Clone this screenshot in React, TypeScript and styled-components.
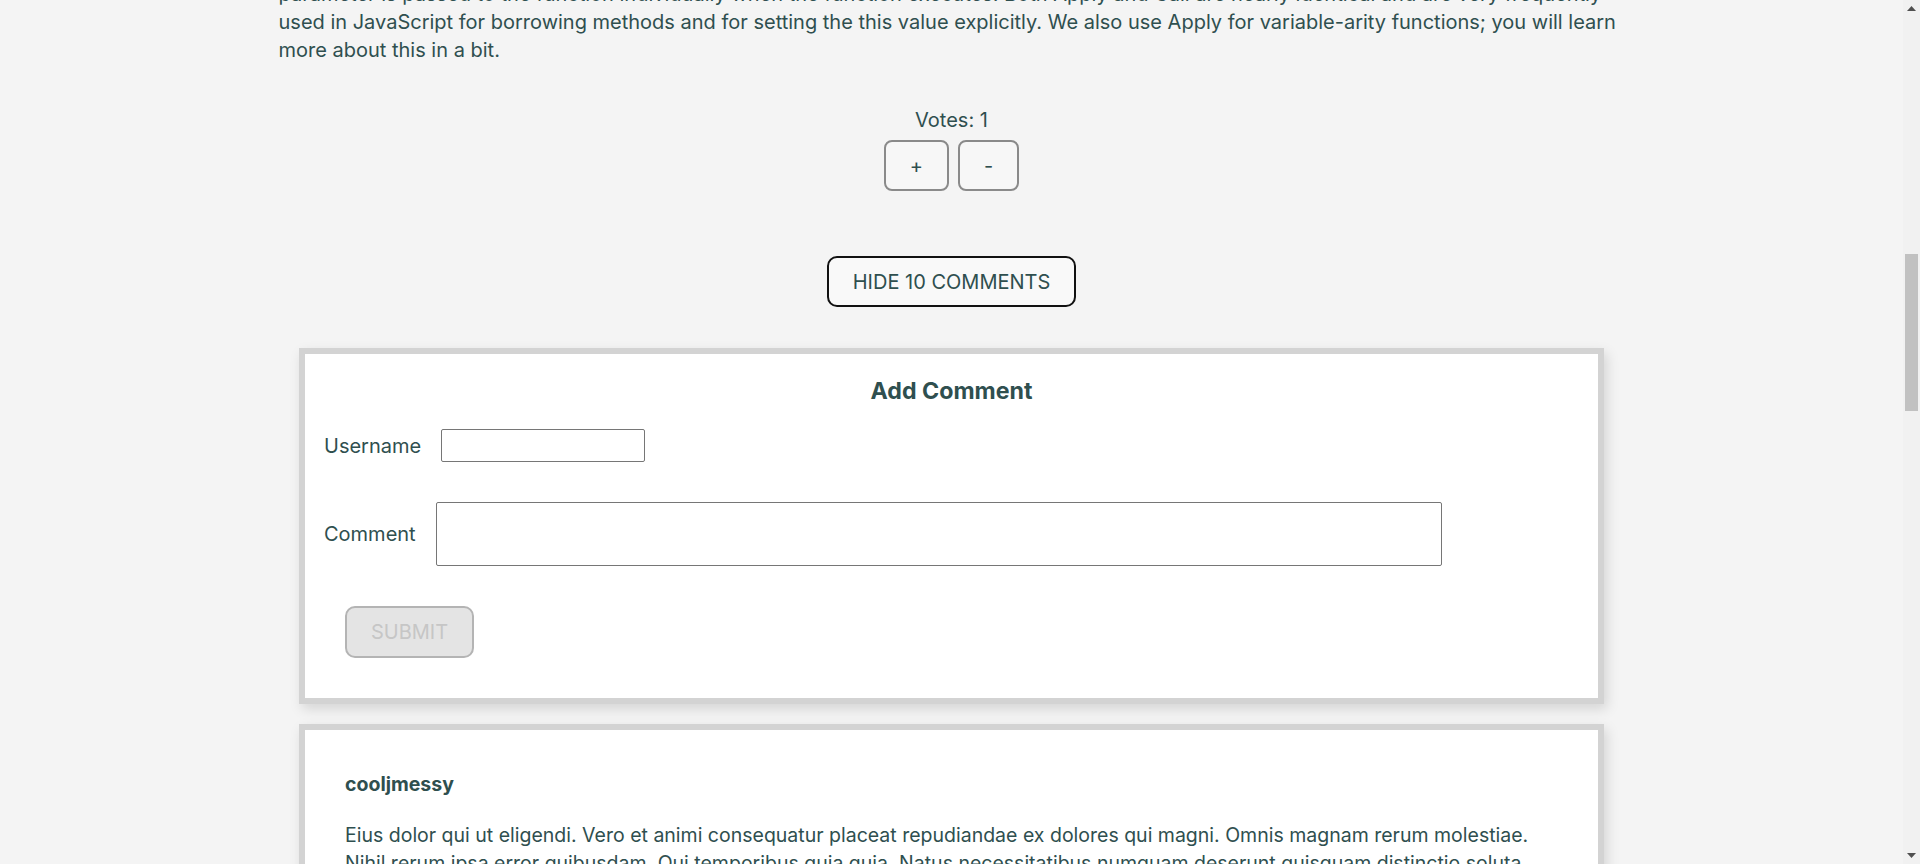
import { useLayoutEffect, useRef, useState, useCallback, RefObject } from "react";
import styled, { createGlobalStyle } from "styled-components";

const GlobalStyle = createGlobalStyle`
  html, body {
    margin: 0;
    padding: 0;
    height: 100%;
    overflow: hidden;
    background-color: #f4f4f4;
  }
  body {
    font-family: Inter, "Noto Sans", "Liberation Sans", sans-serif;
    color: #2f4f4f;
  }
  * {
    box-sizing: border-box;
  }
`;

const Layout = styled.div`
  display: flex;
  height: 100vh;
`;

const Scroller = styled.div`
  flex: 1;
  overflow-y: scroll;
  scrollbar-width: none;
  &::-webkit-scrollbar {
    display: none;
  }
`;

const Rail = styled.div`
  flex: none;
  width: 17px;
  display: flex;
  flex-direction: column;
  background-color: #f1f1f1;
`;

const RailArrow = styled.div`
  height: 17px;
  display: flex;
  align-items: center;
  justify-content: center;
  color: #505050;
`;

const Track = styled.div`
  flex: 1;
  padding: 0 2px;
`;

const Thumb = styled.div`
  background-color: #c1c1c1;
`;

const Page = styled.main`
  display: flex;
  flex-direction: column;
  align-items: center;
  padding: 48px 0 95px;
`;

const Post = styled.article`
  width: 1346px;
  display: flex;
  flex-direction: column;
  align-items: center;
`;

const PostTitle = styled.h2`
  align-self: stretch;
  margin: 0 0 12px;
  font-size: 34px;
  line-height: 44px;
  font-weight: 700;
`;

const Byline = styled.p`
  align-self: stretch;
  margin: 0 0 28px;
  font-size: 18px;
  color: #5f7777;
`;

const Paragraph = styled.p`
  align-self: stretch;
  margin: 0 0 28px;
  font-size: 20px;
  line-height: 28px;
`;

const VoteBox = styled.div`
  display: flex;
  flex-direction: column;
  align-items: center;
  gap: 8px;
  margin-top: 16px;
`;

const VoteCount = styled.span`
  font-size: 20px;
  line-height: 24px;
`;

const VoteButtons = styled.div`
  display: flex;
  gap: 9px;
`;

const VoteButton = styled.button`
  height: 51px;
  padding: 0 24px;
  font-family: inherit;
  font-size: 20px;
  color: #2f4f4f;
  background-color: #f7f7f7;
  border: 2px solid #8a8a8a;
  border-radius: 8px;
  cursor: pointer;
`;

const ToggleButton = styled.button`
  margin-top: 65px;
  height: 51px;
  padding: 0 24px;
  font-family: inherit;
  font-size: 20px;
  color: #2f4f4f;
  text-transform: uppercase;
  background-color: #f9f9f9;
  border: 2px solid #111;
  border-radius: 10px;
  cursor: pointer;
`;

const CommentList = styled.section`
  width: 1305px;
  margin-top: 41px;
  display: flex;
  flex-direction: column;
  gap: 20px;
`;

const Card = styled.div`
  background-color: #fff;
  border: 6px solid #d3d3d3;
  box-shadow: 3px 5px 12px rgba(0, 0, 0, 0.13);
`;

const FormCard = styled(Card).attrs({ as: "form" })`
  display: flex;
  flex-direction: column;
  padding: 22px 19px 40px;
`;

const FormTitle = styled.h3`
  margin: 0 0 23px;
  text-align: center;
  font-size: 23.2px;
  line-height: 30px;
  font-weight: 700;
`;

const FieldRow = styled.label`
  display: flex;
  align-items: center;
  gap: 20px;
  font-size: 20px;
  margin-bottom: 40px;
`;

const TextInput = styled.input`
  width: 204px;
  height: 33px;
  border: 1px solid #767676;
  border-radius: 2px;
  font-family: inherit;
  font-size: 16px;
`;

const TextArea = styled.textarea`
  width: 1006px;
  height: 64px;
  border: 1px solid #767676;
  border-radius: 2px;
  resize: none;
  font-family: inherit;
  font-size: 16px;
`;

const SubmitButton = styled.button`
  align-self: flex-start;
  margin-left: 21px;
  width: 129px;
  height: 52px;
  font-family: inherit;
  font-size: 20px;
  text-transform: uppercase;
  color: #c6c6c6;
  background-color: #e4e4e4;
  border: 2px solid #b4b4b4;
  border-radius: 10px;
`;

const CommentCard = styled(Card)`
  display: flex;
  flex-direction: column;
  gap: 22px;
  padding: 40px;
`;

const CommentAuthor = styled.h4`
  margin: 0;
  font-size: 19.5px;
  line-height: 29px;
  font-weight: 700;
`;

const CommentBody = styled.p`
  margin: 0;
  font-size: 19.5px;
  line-height: 28px;
`;

type Comment = { username: string; body: string };

const comments: Comment[] = [
  {
    username: "cooljmessy",
    body: "Eius dolor qui ut eligendi. Vero et animi consequatur placeat repudiandae ex dolores qui magni. Omnis magnam rerum molestiae. Nihil rerum ipsa error quibusdam. Qui temporibus quia quia. Natus necessitatibus numquam deserunt quisquam distinctio soluta. Consequuntur nisi aut qui quaerat ducimus est. Qui aut sed voluptatem ut et.",
  },
  {
    username: "weegembump",
    body: "Velit quia sint adipisci tenetur. Sed quaerat et distinctio porro. Voluptatem aut et eveniet. Et sed et eaque laudantium natus aut. Quae voluptas praesentium quia eius accusamus quidem nostrum et. Reiciendis qui voluptatem ullam necessitatibus enim. Tempore sequi blanditiis et quia eos molestias fugit quo.",
  },
  {
    username: "grumpy19",
    body: "Quasi omnis sunt enim aut qui eos. Sit quia qui harum rem repellendus. Ea consectetur qui accusantium eveniet quis. Odio aspernatur molestiae molestias nemo aliquid sit. Ut ut esse harum ipsum voluptas et consequatur. Dolores laborum voluptatem tenetur eum nihil. Accusantium et eaque et aut ex rerum.",
  },
  {
    username: "jessjelly",
    body: "Et et quo dolore ut in sit. Et est reprehenderit quia explicabo. Rerum velit et nesciunt rerum molestias necessitatibus. Laudantium ut quas soluta omnis voluptatem voluptatem consectetur aut. Architecto aut et ullam. Quis facilis rerum aut consequuntur quia aut. Eligendi maiores quo eum sit rerum nulla.",
  },
  {
    username: "happyamy2016",
    body: "Ut accusamus enim vel voluptate quae temporibus labore neque a. Reprehenderit iste est eos velit fugit vel quod velit. Vero cupiditate enim quis et eveniet. Corporis nobis aut ut sit quia sunt. Sapiente omnis numquam quasi in aut dolorem. Deserunt sint aut molestiae quod animi est eos ut nam.",
  },
  {
    username: "tickle122",
    body: "Facilis ipsam illum aut voluptatibus. Repudiandae cupiditate quo fugiat. Earum est quis dolorum aut aut. Consequatur et et dolores consectetur qui unde necessitatibus. Qui soluta occaecati est labore quod et magnam. Illum voluptatem dolores est. Omnis commodi a quia repellendus dicta sit.",
  },
  {
    username: "cooljmessy",
    body: "Assumenda sit est blanditiis asperiores est minima. Placeat sequi tempora et est magnam. Doloremque fugit dolorem praesentium quis aliquam odio et ut. Voluptates labore aut minus ipsa vel quod quis. Sint debitis perspiciatis ea omnis neque eveniet. Minus velit quo nisi reprehenderit explicabo quam.",
  },
  {
    username: "jessjelly",
    body: "Harum et iusto sint ut. Tenetur consequatur aut ex sapiente et accusamus. Corrupti consequatur quia itaque repudiandae. Explicabo et quam dolor est laborum sed optio molestias. Eaque ad quam molestias ut doloremque. Sunt autem a perferendis iusto cum et inventore.",
  },
  {
    username: "weegembump",
    body: "Iure cum non ut omnis et voluptatibus est et. Praesentium cupiditate ea doloribus dolor. Quaerat est veniam numquam voluptas ex est. Atque veritatis nihil quia veritatis porro doloremque. Quo temporibus et ducimus quae molestiae. Ad qui sint nobis molestias et eius.",
  },
  {
    username: "grumpy19",
    body: "Qui ut ut fuga fugit quia et. Voluptatem aut magnam nihil quos omnis culpa. Modi molestias enim magnam sed perspiciatis. Omnis et accusamus doloremque incidunt quia cupiditate. Magni voluptate cupiditate officia aut quae. Et delectus earum praesentium qui voluptatem officia.",
  },
];

function Votes({ count, anchorRef }: { count: number; anchorRef?: RefObject<HTMLDivElement | null> }) {
  return (
    <VoteBox ref={anchorRef}>
      <VoteCount>Votes: {count}</VoteCount>
      <VoteButtons>
        <VoteButton type="button">+</VoteButton>
        <VoteButton type="button">-</VoteButton>
      </VoteButtons>
    </VoteBox>
  );
}

function AddComment() {
  return (
    <FormCard onSubmit={(e: React.FormEvent) => e.preventDefault()}>
      <FormTitle>Add Comment</FormTitle>
      <FieldRow>
        Username
        <TextInput type="text" />
      </FieldRow>
      <FieldRow>
        Comment
        <TextArea />
      </FieldRow>
      <SubmitButton type="submit" disabled>
        Submit
      </SubmitButton>
    </FormCard>
  );
}

function ScrollRail({ top, height, trackRef }: { top: number; height: number; trackRef: RefObject<HTMLDivElement | null> }) {
  return (
    <Rail>
      <RailArrow>
        <svg width="9" height="5" viewBox="0 0 9 5">
          <polygon points="0,5 4.5,0 9,5" fill="currentColor" />
        </svg>
      </RailArrow>
      <Track ref={trackRef}>
        <Thumb style={{ marginTop: top, height }} />
      </Track>
      <RailArrow>
        <svg width="9" height="5" viewBox="0 0 9 5">
          <polygon points="0,0 9,0 4.5,5" fill="currentColor" />
        </svg>
      </RailArrow>
    </Rail>
  );
}

export default function App() {
  const scrollerRef = useRef<HTMLDivElement>(null);
  const trackRef = useRef<HTMLDivElement>(null);
  const votesRef = useRef<HTMLDivElement>(null);
  const [thumb, setThumb] = useState({ top: 0, height: 0 });

  const measure = useCallback(() => {
    const box = scrollerRef.current;
    const track = trackRef.current;
    if (!box || !track) return;
    const trackH = track.clientHeight;
    const h = Math.max(17, (trackH * box.clientHeight) / box.scrollHeight);
    const range = box.scrollHeight - box.clientHeight;
    const t = range > 0 ? ((trackH - h) * box.scrollTop) / range : 0;
    setThumb({ top: t, height: h });
  }, []);

  useLayoutEffect(() => {
    const box = scrollerRef.current;
    const el = votesRef.current;
    if (!box || !el) return;
    const top = el.getBoundingClientRect().top - box.getBoundingClientRect().top + box.scrollTop;
    box.scrollTop = top - 108;
    measure();
  }, [measure]);

  return (
    <>
      <GlobalStyle />
      <Layout>
        <Scroller ref={scrollerRef} onScroll={measure}>
          <Page>
            <Post>
              <PostTitle>JavaScript's Apply, Call, and Bind Methods are Essential for JavaScript Professionals</PostTitle>
              <Byline>Posted by tickle122 in coding</Byline>
              <Paragraph>
                Functions are objects in JavaScript, as you should know by now, if you have read any of the
                prerequisite articles. And as objects, functions have methods, including the powerful Apply, Call, and
                Bind methods. On the one hand, Apply and Call are nearly identical and are frequently used in
                JavaScript for borrowing methods and for setting the this value explicitly.
              </Paragraph>
              <Paragraph>
                On the other hand, we use Bind for setting the this value in methods and for currying functions. We
                will discuss every scenario in which we use these three methods in JavaScript. While Apply and Call
                come with ECMAScript 3 (available on IE 6, 7, 8, and modern browsers), ECMAScript 5 (available on only
                modern browsers) added the Bind method. These three Function methods are workhorses and sometimes you
                absolutely need one of them. Let's begin with the Bind method.
              </Paragraph>
              <Paragraph>
                We use the Bind () method primarily to call a function with the this value set explicitly. It other
                words, bind () allows us to easily set which specific object will be bound to this when a function or
                method is invoked. This might seem relatively trivial, but often the this value in methods and
                functions must be set explicitly when you need a specific object bound to the function's this value.
              </Paragraph>
              <Paragraph>
                The need for bind usually occurs when we use the this keyword in a method and we call that method from
                a receiver object; in such cases, sometimes this is not bound to the object that we expect it to be
                bound to, resulting in errors in our applications. Don't worry if you don't fully comprehend the
                preceding sentence. It will become clear like teardrop water.
              </Paragraph>
              <Paragraph>
                Before we look at the code for this section, we should understand the this keyword in JavaScript. If
                you don't already understand this in JavaScript, read my article, Understand JavaScript's "this" With
                Clarity, and Master It. If you don't understand this in JavaScript, you will have trouble
                understanding some of the concepts discussed below.
              </Paragraph>
              <Paragraph>
                When we pass a method that uses this as a callback to be used as a callback function, the this value
                inside the method is no longer the object we meant. Instead, this is bound to the button element, or
                to the global window object when the callback runs in non-strict mode, because that is where the
                function is finally invoked. To fix the problem we bind the method to the object, so that whenever the
                callback executes, this points to the right object and the data we read from it is the data we expect.
              </Paragraph>
              <Paragraph>
                Bind also allows us to borrow methods. In JavaScript, we can pass functions around, return them, borrow
                them, and the like. And the bind () method makes it super easy to borrow methods. Objects that look
                like arrays, such as the arguments object or a NodeList, do not have array methods, but with bind,
                call, or apply we can borrow the methods of Array.prototype and use them on these array-like objects
                without duplicating any code in our own programs.
              </Paragraph>
              <Paragraph>
                In addition to setting the this value, the bind () method can be used to curry a function. Function
                Currying, also known as partial function application, is the use of a function (that accept one or more
                arguments) that returns a new function with some of the arguments already set. The function that is
                returned has access to the stored arguments and variables of the outer function. This sounds way more
                complex than it actually is, so let's code.
              </Paragraph>
              <Paragraph>
                The Apply and Call methods are two of the most often used Function methods in JavaScript, and for good
                reason: they allow us to borrow functions and set the this value in function invocation. In addition,
                the apply function in particular allows us to execute a function with an array of parameters, such that
                each
                <br />
                parameter is passed to the function individually when the function executes. Both Apply and Call are
                nearly identical and are very frequently
                <br />
                used in JavaScript for borrowing methods and for setting the this value explicitly. We also use Apply
                for variable-arity functions; you will learn more about this in a bit.
              </Paragraph>
              <Votes count={1} anchorRef={votesRef} />
              <ToggleButton type="button">Hide 10 comments</ToggleButton>
              <CommentList>
                <AddComment />
                {comments.map((c, i) => (
                  <CommentCard key={i}>
                    <CommentAuthor>{c.username}</CommentAuthor>
                    <CommentBody>{c.body}</CommentBody>
                  </CommentCard>
                ))}
              </CommentList>
            </Post>
          </Page>
        </Scroller>
        <ScrollRail top={thumb.top} height={thumb.height} trackRef={trackRef} />
      </Layout>
    </>
  );
}
